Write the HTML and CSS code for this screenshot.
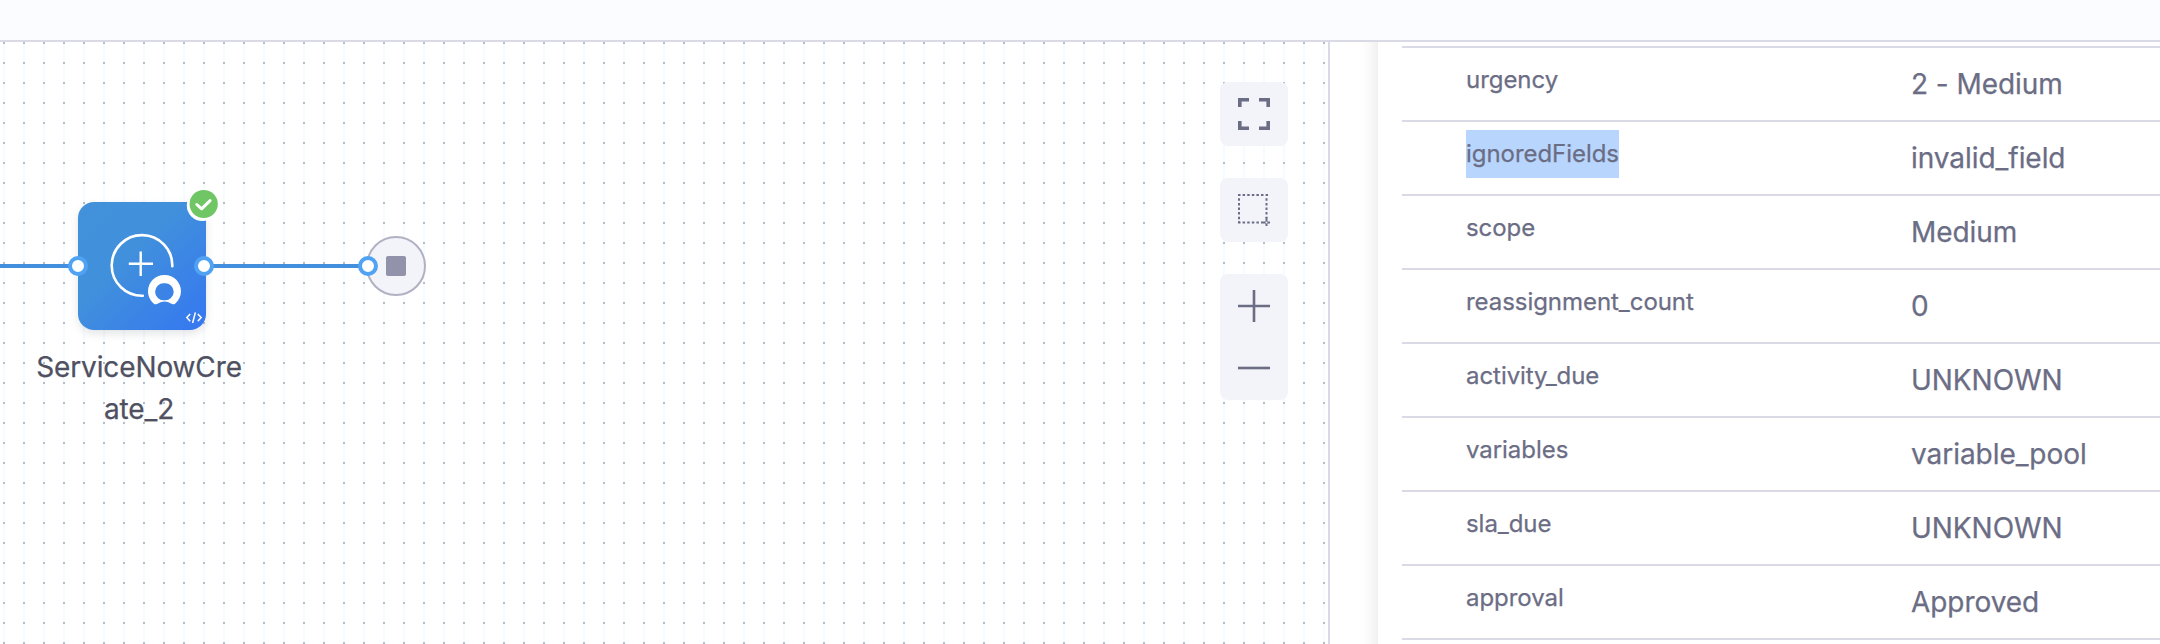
FILE: index.html
```html
<!DOCTYPE html>
<html lang="en">
<head>
<meta charset="utf-8">
<title>Pipeline execution</title>
<link rel="stylesheet" href="styles.css">
</head>
<body>
<header class="topbar"></header>
<main class="main">
  <section class="canvas">
    <svg class="links" width="400" height="20" viewBox="0 0 400 20"><path d="M0 10H368" stroke="#418fdd" stroke-width="4"/></svg>
    <div class="stop"><span class="stop-square"></span></div>
    <div class="step">
      <svg width="128" height="128" viewBox="0 0 128 128" fill="none" stroke="#fff">
        <path d="M94.3 64.2A30.3 30.3 0 1 0 64.8 93.7" stroke-width="2.6" stroke-linecap="round"/>
        <path d="M50.8 61.7H75M62.7 49.6V74" stroke-width="2.4"/>
        <path d="M86.5 73C77 73 70 80.4 70 89.3C70 94.2 72.2 98.6 75.6 101.4C76.8 102.5 78.6 102.6 80 101.6C84 98.9 89 98.9 93 101.6C94.4 102.6 96 102.5 97.3 101.4C100.8 98.5 103 94.2 103 89.3C103 80.4 96 73 86.5 73ZM86.4 98.2A8.4 8.5 0 1 1 86.4 81.3A8.4 8.5 0 1 1 86.4 98.2Z" fill="#fff" fill-rule="evenodd" stroke="none"/>
        <path d="M112.2 112L108.8 115.6L112.2 119.2M119.8 112L123.2 115.6L119.8 119.2M117.4 110.4L114.6 121" stroke-width="1.5"/>
      </svg>
    </div>
    <svg class="badge" width="34" height="34" viewBox="0 0 34 34"><circle cx="16.4" cy="17.4" r="15.6" fill="#fff"/><circle cx="17.7" cy="16" r="14.1" fill="#70c665"/><path d="M10.8 16.5L15.6 20.8L24.1 12.6" fill="none" stroke="#fff" stroke-width="3" stroke-linecap="round" stroke-linejoin="round"/></svg>
    <span class="port port-in"></span>
    <span class="port port-out"></span>
    <span class="port port-end"></span>
    <div class="step-name">ServiceNowCre<br>ate_2</div>
    <div class="tools">
      <div class="tool"><svg width="32" height="32" viewBox="0 0 32 32" fill="none" stroke="#6b6d85" stroke-width="3.6"><path d="M1.8 9V1.8H11M21 1.8H30.2V9M30.2 23V30.2H21M11 30.2H1.8V23"/></svg></div>
      <div class="tool"><svg width="32" height="32" viewBox="0 0 32 32" fill="none" stroke="#6b6d85" stroke-width="2"><path d="M0 1H30" stroke-dasharray="2.5 2.1"/><path d="M1 4.3V28M28.5 4.3V24" stroke-dasharray="2.5 2.1"/><path d="M0 28.5H23" stroke-dasharray="2.5 2.1"/><path d="M28.5 23V32M23 28.5H32"/><circle cx="28.5" cy="28.5" r="1" fill="#f3f3fa" stroke="none"/></svg></div>
      <div class="tool tool-zoom">
        <svg width="32" height="32" viewBox="0 0 32 32" stroke="#6b6d85" stroke-width="2.6"><path d="M0 16H32M16 0V32"/></svg>
        <svg width="32" height="4" viewBox="0 0 32 4" stroke="#6b6d85" stroke-width="2.6"><path d="M0 2H32"/></svg>
      </div>
    </div>
  </section>
  <aside class="side">
    <div class="drawer">
      <div class="table">
        <div class="row"><div class="key">urgency</div><div class="value">2 - Medium</div></div>
        <div class="row"><div class="key"><span class="selected">ignoredFields</span></div><div class="value">invalid_field</div></div>
        <div class="row"><div class="key">scope</div><div class="value">Medium</div></div>
        <div class="row"><div class="key">reassignment_count</div><div class="value">0</div></div>
        <div class="row"><div class="key">activity_due</div><div class="value">UNKNOWN</div></div>
        <div class="row"><div class="key">variables</div><div class="value">variable_pool</div></div>
        <div class="row"><div class="key">sla_due</div><div class="value">UNKNOWN</div></div>
        <div class="row"><div class="key">approval</div><div class="value">Approved</div></div>
      </div>
    </div>
  </aside>
</main>
</body>
</html>
```
FILE: styles.css
```css
* { box-sizing: border-box; }
body {
  margin: 0;
  height: 644px;
  overflow: hidden;
  display: flex;
  flex-direction: column;
  background: #fff;
  font-family: Inter, "Liberation Sans", sans-serif;
  color: #6b6d85;
  -webkit-text-stroke: .25px currentColor;
}
svg { display: block; flex: none; }
.topbar { height: 42px; flex: none; background: #fbfcff; border-bottom: 2px solid #d9dae6; }
.main { flex: 1; min-height: 0; display: flex; }
.canvas {
  position: relative;
  width: 1328px;
  flex: none;
  display: flex;
  justify-content: flex-end;
  background-image:
    conic-gradient(from 0deg at 2px 2px, transparent 75%, #b4bec8 0),
    linear-gradient(90deg, #f6fbff 2px, transparent 2px);
  background-size: 20px 20px;
  background-position: 3px 0;
}
.links { position: absolute; left: 0; top: 214px; }
.step {
  position: absolute;
  left: 78px;
  top: 160px;
  width: 128px;
  height: 128px;
  border-radius: 16px;
  background: linear-gradient(135deg, #4291da 0%, #4190dc 40%, #3577f1 100%);
  box-shadow: 0 4px 8px rgba(96, 97, 112, .16), 0 0 2px rgba(40, 41, 61, .04);
}
.badge { position: absolute; left: 186px; top: 146px; }
.port {
  position: absolute;
  top: 214px;
  width: 20px;
  height: 20px;
  border: 4px solid #50a3f2;
  border-radius: 50%;
  background: #fff;
}
.port-in { left: 68px; }
.port-out { left: 194px; }
.port-end { left: 358px; }
.stop {
  position: absolute;
  left: 366px;
  top: 194px;
  width: 60px;
  height: 60px;
  display: grid;
  place-items: center;
  border: 2px solid #b0b1c3;
  border-radius: 50%;
  background: #f3f3fa;
}
.stop-square { width: 20px; height: 20px; border-radius: 2px; background: #9293ab; }
.step-name {
  position: absolute;
  left: 18px;
  top: 304px;
  width: 242px;
  text-align: center;
  font-size: 28px;
  line-height: 42px;
  letter-spacing: -.12px;
  color: #4f5162;
}
.tools { display: flex; flex-direction: column; gap: 32px; padding: 40px 40px 0 0; }
.tool {
  width: 68px;
  height: 64px;
  display: flex;
  flex-direction: column;
  align-items: center;
  padding-top: 16px;
  border-radius: 8px;
  background: #f3f3fa;
}
.tool-zoom { height: 126px; gap: 44px; }
.side { flex: 1; display: flex; padding-left: 48px; border-left: 2px solid #d9dae6; overflow: hidden; }
.drawer { flex: 1; margin: -20px 0; padding: 24px 0 0 24px; background: #fff; box-shadow: 0 0 18px rgba(40, 41, 61, .14); }
.table { border-top: 2px solid #d9dae6; }
.row { height: 74px; display: flex; border-bottom: 2px solid #d9dae6; }
.key { width: 509px; flex: none; padding: 8px 0 0 64px; font-size: 24px; line-height: 48px; letter-spacing: -.05px; }
.selected { display: inline-block; background: #b8d6fd; }
.value { font-size: 28px; line-height: 42px; padding-top: 15px; white-space: nowrap; letter-spacing: -.05px; }
```
